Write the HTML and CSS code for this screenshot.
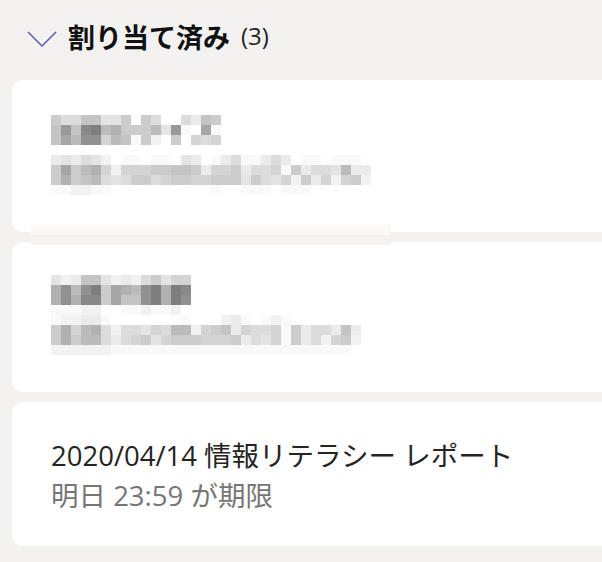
FILE: index.html
```html
<!DOCTYPE html>
<html lang="ja">
<head>
    <meta charset="UTF-8" />
    <meta name="viewport" content="width=device-width, initial-scale=1.0" />
    <title>課題 | 割り当て済み</title>
    <link rel="stylesheet" href="styles.css">
</head>
<body>
    <section class="assigned">
        <div class="section-header">
            <svg class="chevron" width="30" height="16" viewBox="0 0 30 16" aria-hidden="true">
                <polyline points="1,1 15,15 29,1" fill="none" stroke="#6264A7" stroke-width="1.6" />
            </svg>
            <h2>割り当て済み<span class="count">(3)</span></h2>
        </div>

        <div class="task-list">
            <!-- ぼかし済みの課題 -->
            <div class="task-card blurred first">
                <div class="mosaic" data-rows="m1"></div>
            </div>
            <div class="task-card blurred second">
                <div class="mosaic" data-rows="m2"></div>
            </div>

            <div class="task-card">
                <p class="task-title">2020/04/14 情報リテラシー レポート</p>
                <p class="task-due">明日 23:59 が期限</p>
            </div>

            <!-- モザイクのはみ出し部分 -->
            <div class="mosaic-strip"></div>
        </div>
    </section>

    <script>
        /* モザイクのセル（1 文字 = 10px 四方の灰色） */
        const levels = {
            '0': '#7e7e7e', '1': '#888', '2': '#919191', '3': '#999', '4': '#a6a6a6',
            '5': '#b1b1b1', '6': '#bbb', '7': '#c4c4c4', '8': '#ccc', '9': '#d4d4d4',
            'a': '#dcdcdc', 'b': '#e4e4e4', 'c': '#ebebeb', 'd': '#f2f2f2', 'e': '#f9f9f9', 'f': '#fff'
        };

        const mosaics = {
            m1: [
                '8aa77bb8f8affac78',
                '73710658886b3ef4e',
                '74622967e8df8f9a9',
                'ffffffffffffffffffffffffffffffff',
                'cbcabdfeefeefbcfecaeecacfeefeeef',
                '848659d99988778c998caa9e8caab6cc',
                '85876aba88a98899888b8ab9d8c9d98d',
                'eeddeeffffffffffeffeeefeeeffffff'
            ],
            m2: [
                'bdc77bdcda8b99',
                '52620845620501',
                '52511847720502',
                'eeeddffeedeedf',
                'eddccefffffffefffdcefedeffffffff',
                '85965adaab9a66d987c9aa9e8caac7cf',
                '85866aca98b98889998cab9e8cad98df',
                'ddddddeeeeeeeeeeeeeeeeeeeeeeeeff'
            ]
        };

        document.querySelectorAll('.mosaic').forEach(box => {
            mosaics[box.dataset.rows].forEach(row => {
                const line = document.createElement('div');
                line.className = 'mosaic-row';
                for (const ch of row) {
                    const cell = document.createElement('span');
                    cell.style.background = levels[ch] || '#fff';
                    line.appendChild(cell);
                }
                box.appendChild(line);
            });
        });
    </script>
</body>
</html>
```

FILE: styles.css
```css
*, *::before, *::after {
    box-sizing: border-box;
    margin: 0;
    padding: 0;
}

body {
    background: #F3F2F1;
    font-family: 'Open Sans', 'Noto Sans CJK JP', sans-serif;
    color: #252423;
    overflow: hidden;
}

/* 見出し */
.section-header {
    display: flex;
    align-items: center;
    gap: 11px;
    height: 80px;
    padding-left: 27px;
    padding-bottom: 8px;
}

    .section-header h2 {
        font-family: 'Noto Sans CJK JP', sans-serif;
        font-size: 27px;
        font-weight: 700;
        color: #111;
        line-height: 1;
        display: flex;
        align-items: center;
    }

    .section-header .count {
        font-family: 'Open Sans', sans-serif;
        font-size: 24px;
        font-weight: 400;
        margin-left: 11px;
        color: #252423;
    }

.chevron {
    flex-shrink: 0;
    margin-top: 6px;
}

/* 課題カード */
.task-list {
    position: relative;
    display: flex;
    flex-direction: column;
    gap: 10px;
    padding-left: 12px;
}

.task-card {
    background: #FFFFFF;
    border-radius: 11px;
    margin-right: -30px;
    height: 144px;
    padding: 34px 0 0 39px;
}

    .task-card.first {
        height: 152px;
        padding: 35px 0 0 39px;
    }

    .task-card.second {
        height: 150px;
        padding: 33px 0 0 39px;
    }

.task-title {
    font-size: 27.5px;
    line-height: 40px;
}

.task-due {
    font-size: 27.5px;
    line-height: 40px;
    color: #767676;
}

/* モザイク */
.mosaic-row {
    display: flex;
    height: 10px;
}

    .mosaic-row span {
        flex: 0 0 10px;
        height: 10px;
    }

.mosaic-strip {
    position: absolute;
    left: 31px;
    top: 145px;
    width: 360px;
    height: 20px;
    background: linear-gradient(#FAF9F8 0 10px, #F4F3F2 10px 20px);
}
```
